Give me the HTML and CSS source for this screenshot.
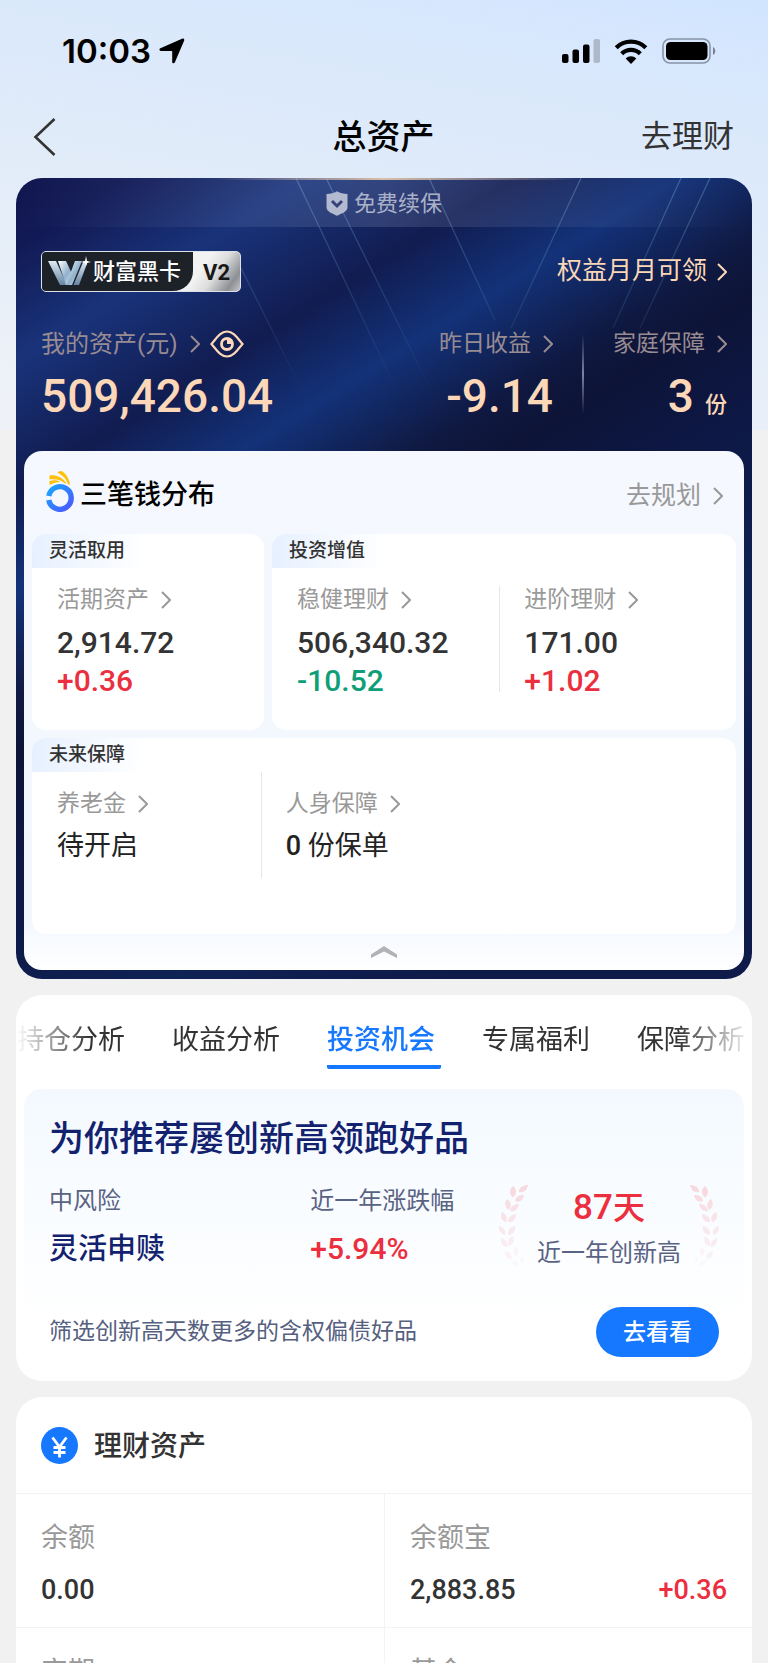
FILE: index.html
```html
<!DOCTYPE html>
<html lang="zh-CN">
<head>
<meta charset="utf-8">
<meta name="viewport" content="width=device-width, initial-scale=1">
<title>总资产</title>
<link rel="stylesheet" href="styles.css">
</head>
<body>
<svg class="defs" width="0" height="0" aria-hidden="true">
  <symbol id="chev" viewBox="0 0 10 18"><path d="M1 1l8 8-8 8" fill="none" stroke="currentColor" stroke-width="2"/></symbol>
  <symbol id="laurel" viewBox="0 0 30 84">
    <g fill="#f6c3ca">
      <path opacity=".6" d="M20 7c0-5 4-7 9-7-1 5-4 8-9 7z"/>
      <path opacity=".6" d="M14 12.500c-4-3-4-8 0-11.500 4 3 4 8 0 11.500z"/>
      <path opacity=".55" d="M16 16c1-5 4-6 9-6-1 5-4 8-9 6z"/>
      <path opacity=".52" d="M10 25c-4-2-5-7-2-11 4 3 5 7 2 11z"/>
      <path opacity=".48" d="M11 26c1-5 4-7 9-7-1 5-4 8-9 7z"/>
      <path opacity=".43" d="M7 37c-5-1-6-6-4-10 4 2 6 6 4 10z"/>
      <path opacity=".4" d="M9 37c0-5 3-7 8-8 0 5-3 9-8 8z"/>
      <path opacity=".35" d="M6 50c-5-1-6-5-6-9 5 1 7 5 6 9z"/>
      <path opacity=".33" d="M9 50c0-5 2-8 7-9 1 5-2 9-7 9z"/>
      <path opacity=".28" d="M8 62c-5-1-7-5-6-9 4 1 7 4 6 9z"/>
      <path opacity=".25" d="M9 61c-1-5 1-8 5-10 2 5 0 9-5 10z"/>
      <path opacity=".18" d="M13 74c-5 0-7-3-7-8 5 1 7 4 7 8z"/>
      <path opacity=".15" d="M16 71c-2-4-1-7 1-9 4 3 3 7-1 9z"/>
      <path opacity=".1" d="M20 81c-4 0-6-2-7-5 4-1 7 1 7 5zM23 78c-2-3-2-5 0-7 2 3 2 5 0 7z"/>
    </g>
  </symbol>
</svg>
<div class="app">
  <div class="status">
    <div class="status-side">
      <span class="clock">10:03</span>
      <svg width="26" height="26" viewBox="0 0 26 26"><path d="M23 .8c1.500-.7 2.700.5 2.100 2L15.900 24.300c-.6 1.400-2.700 1.200-2.700-.4V13.600c0-.5-.2-.7-.7-.7H1.900c-1.700 0-2-2-.5-2.700z"/></svg>
    </div>
    <div class="status-side status-icons">
      <svg width="38" height="24" viewBox="0 0 38 24"><rect x="0" y="15" width="6.500" height="9" rx="2"/><rect x="10.500" y="10.500" width="6.500" height="13.500" rx="2"/><rect x="21" y="5.500" width="6.500" height="18.500" rx="2"/><rect x="31.500" y="0" width="6.500" height="24" rx="2" fill="#adb9ca"/></svg>
      <svg width="34" height="25" viewBox="0 0 34 25"><g fill="none" stroke="#000" stroke-width="4.300"><path d="M2.200 8.800a21 21 0 0 1 29.600 0"/><path d="M7.700 14.700a13 13 0 0 1 18.600 0"/></g><path d="M17 25l-5.300-5.500a7.600 7.600 0 0 1 10.600 0z"/></svg>
      <svg width="54" height="26" viewBox="0 0 54 26"><rect x="1" y="1" width="47" height="24" rx="7" fill="none" stroke="#8794a5" stroke-width="1.600"/><rect x="4" y="4" width="41.500" height="18" rx="4.500"/><path d="M51 9v8c3-1.500 3-6.500 0-8z" fill="#76828f"/></svg>
    </div>
  </div>

  <header class="nav">
    <button class="back" type="button" aria-label="返回"><svg width="24" height="38" viewBox="0 0 24 38"><path d="M21.500 1L2.500 19l19 18" fill="none" stroke="#333" stroke-width="2.600"/></svg></button>
    <h1 class="nav-title">总资产</h1>
    <a class="nav-link" href="#">去理财</a>
  </header>

  <section class="wealth">
    <svg class="rays" viewBox="0 0 736 272" preserveAspectRatio="none" aria-hidden="true">
      <defs><linearGradient id="ray" gradientUnits="userSpaceOnUse" x1="0" y1="0" x2="0" y2="215"><stop offset="0" stop-color="#6fa5cf" stop-opacity=".4"/><stop offset="1" stop-color="#6fa5cf" stop-opacity="0"/></linearGradient></defs>
      <path d="M413 0l66 142M310 0l104 210M280 0l102 215M225 90l70 140M565 0l-70 150M665 0l-68 150M694 0l-70 150" fill="none" stroke="url(#ray)" stroke-width="1.300"/>
    </svg>
    <a class="renew" href="#">
      <svg width="22" height="25" viewBox="0 0 22 25"><path d="M11 .3c3 2 6.500 2.500 10.500 2.700v13c0 5-6 6.500-10.500 8.700C6.500 22.500.5 21 .5 16V3C4.500 2.800 8 2.300 11 .3z" fill="#b3bad0"/><path d="M6 10l5 5 5-5" fill="none" stroke="#33437a" stroke-width="3"/></svg>
      <span>免费续保</span>
    </a>
    <div class="member">
      <a class="badge" href="#">
        <span class="badge-name">
          <svg width="44" height="32" viewBox="0 0 44 32"><defs><linearGradient id="steel" x1="0" y1="0" x2="1" y2="1"><stop offset="0" stop-color="#fff"/><stop offset=".55" stop-color="#8fb0cc"/><stop offset="1" stop-color="#e8f4fc"/></linearGradient><linearGradient id="steel2" x1="0" y1="0" x2="0" y2="1"><stop offset="0" stop-color="#dfeaf4"/><stop offset="1" stop-color="#6685a3"/></linearGradient></defs><path d="M1 5h8l11 24h-7z" fill="url(#steel2)"/><path d="M11 5h8l8 17-4 7h-4z" fill="url(#steel)"/><path d="M28 5h7l-10 24h-6z" fill="url(#steel)"/><path d="M36.500 5H41l-9 24h-5.500z" fill="url(#steel2)"/><path d="M39 0l1 5 4 1-4 1-1 3-1-3-4-1 4-1z" fill="#fff"/></svg>
          <span>财富黑卡</span>
        </span>
        <span class="badge-level">V2</span>
      </a>
      <a class="perks" href="#"><span>权益月月可领</span><svg class="chev"><use href="#chev"/></svg></a>
    </div>
    <div class="totals">
      <div class="total total-main">
        <div class="total-label"><a class="label-link label-main" href="#"><span>我的资产(元)</span><svg class="chev"><use href="#chev"/></svg></a>
          <button class="eye" type="button" aria-label="隐藏金额"><svg width="34" height="28" viewBox="0 0 34 28"><g fill="none" stroke="#fcd7b8"><path d="M1.500 14C6 9 10 1.500 17 1.500S28 9 32.500 14C28 19 24 26.500 17 26.500S6 19 1.500 14z" stroke-width="2.200"/><circle cx="17" cy="14" r="5.500" stroke-width="2.800"/></g><path d="M17 9v5h5A5 5 0 0 0 17 9z" fill="#fcd7b8"/></svg></button></div>
        <div class="total-value">509,426.04</div>
      </div>
      <div class="total total-right">
        <a class="label-link" href="#"><span>昨日收益</span><svg class="chev"><use href="#chev"/></svg></a>
        <div class="total-value">-9.14</div>
      </div>
      <div class="total-rule"></div>
      <div class="total total-right">
        <a class="label-link" href="#"><span>家庭保障</span><svg class="chev"><use href="#chev"/></svg></a>
        <div class="total-value">3<span class="unit">份</span></div>
      </div>
    </div>

    <div class="plan">
      <div class="plan-head">
        <svg class="plan-logo" width="30" height="42" viewBox="0 0 30 42"><defs><linearGradient id="ring" x1="0" y1="0" x2="1" y2="1"><stop offset="0" stop-color="#18a6ff"/><stop offset="1" stop-color="#4d57ff"/></linearGradient></defs><path d="M3.800 26a11.300 11.300 0 1 1 0 4" fill="none" stroke="url(#ring)" stroke-width="5.400"/><g fill="#ffc107"><path d="M12.500 2.500C14 1 16 .5 17.500 1.500c4 3 7 7.500 7.500 13.500l-2-.8c-1.500-5-5-8.700-10.500-11.700z"/><path d="M4.500 5.500c6-.8 13 1.500 17 8l-2-.3C15.500 9.500 10 9 4.500 9.500z"/><path d="M4.500 11c4-1 8-1 11 1-4 0-7 1-11 3z"/></g></svg>
        <h2 class="plan-title">三笔钱分布</h2>
        <a class="plan-link" href="#"><span>去规划</span><svg class="chev"><use href="#chev"/></svg></a>
      </div>
      <div class="buckets">
        <section class="bucket">
          <h3 class="tag">灵活取用</h3>
          <div class="cells"><div class="cell">
            <a class="cell-label" href="#"><span>活期资产</span><svg class="chev"><use href="#chev"/></svg></a>
            <div class="amount">2,914.72</div><div class="amount up">+0.36</div>
          </div></div>
        </section>
        <section class="bucket">
          <h3 class="tag">投资增值</h3>
          <div class="cells two">
            <div class="cell">
              <a class="cell-label" href="#"><span>稳健理财</span><svg class="chev"><use href="#chev"/></svg></a>
              <div class="amount">506,340.32</div><div class="amount down">-10.52</div>
            </div>
            <div class="cell">
              <a class="cell-label" href="#"><span>进阶理财</span><svg class="chev"><use href="#chev"/></svg></a>
              <div class="amount">171.00</div><div class="amount up">+1.02</div>
            </div>
          </div>
        </section>
        <section class="bucket wide">
          <h3 class="tag">未来保障</h3>
          <div class="cells thirds">
            <div class="cell">
              <a class="cell-label" href="#"><span>养老金</span><svg class="chev"><use href="#chev"/></svg></a>
              <div class="cover">待开启</div>
            </div>
            <div class="cell">
              <a class="cell-label" href="#"><span>人身保障</span><svg class="chev"><use href="#chev"/></svg></a>
              <div class="cover"><b>0</b> 份保单</div>
            </div>
          </div>
        </section>
      </div>
      <button class="fold" type="button" aria-label="收起"><svg width="26" height="12" viewBox="0 0 26 12"><path d="M0 8.500L13 0l13 8.500V12L13 5.500 0 12z" fill="#b0b2b6"/></svg></button>
    </div>
  </section>

  <section class="card">
    <nav class="tabs">
      <a class="tab" href="#">持仓分析</a>
      <a class="tab" href="#">收益分析</a>
      <a class="tab active" href="#">投资机会</a>
      <a class="tab" href="#">专属福利</a>
      <a class="tab" href="#">保障分析</a>
    </nav>
    <div class="offer">
      <h2 class="offer-title">为你推荐屡创新高领跑好品</h2>
      <div class="facts">
        <div class="fact"><div class="fact-label">中风险</div><div class="fact-value">灵活申赎</div></div>
        <div class="fact"><div class="fact-label">近一年涨跌幅</div><div class="fact-value rate">+5.94%</div></div>
        <div class="award">
          <svg class="laurel" viewBox="0 0 30 84"><use href="#laurel"/></svg>
          <div class="award-text"><div class="award-days">87<span>天</span></div><div class="fact-label">近一年创新高</div></div>
          <svg class="laurel flip" viewBox="0 0 30 84"><use href="#laurel"/></svg>
        </div>
      </div>
      <div class="offer-foot"><p class="note">筛选创新高天数更多的含权偏债好品</p><button class="go" type="button">去看看</button></div>
    </div>
  </section>

  <section class="card holdings">
    <div class="holdings-head">
      <svg width="37" height="37" viewBox="0 0 37 37"><circle cx="18.500" cy="18.500" r="18.500" fill="#1677ff"/><path d="M11.500 10.500l7 9.500 7-9.500M18.500 19v11.500M12.500 20.500h12M12.500 25.500h12" fill="none" stroke="#fff" stroke-width="2.800"/></svg>
      <h2 class="holdings-title">理财资产</h2>
    </div>
    <div class="grid">
      <a class="item" href="#"><span class="item-name">余额</span><span class="item-row"><span>0.00</span></span></a>
      <a class="item" href="#"><span class="item-name">余额宝</span><span class="item-row"><span>2,883.85</span><span class="up">+0.36</span></span></a>
      <a class="item" href="#"><span class="item-name">定期</span></a>
      <a class="item" href="#"><span class="item-name">基金</span></a>
    </div>
  </section>
</div>
</body>
</html>
```
FILE: styles.css
```css
* { box-sizing: border-box; }
body, h1, h2, h3, p { margin: 0; }
body {
  font-family: Roboto, "Noto Sans CJK SC", sans-serif;
  color: #333;
  background: #f1f1f1;
}
h1, h2, h3 { font-weight: 500; }
a { color: inherit; text-decoration: none; }
button { border: 0; padding: 0; background: none; font: inherit; color: inherit; }
svg { display: block; flex: none; }
.defs { position: absolute; }
.chev { width: 10px; height: 18px; }

.app {
  height: 100vh;
  overflow-y: auto;
  scrollbar-width: none;
  padding: 0 16px;
  background: linear-gradient(190deg, #d1e5ff 0, #d9e8fc 100px, #e0ebf9 250px, #eef2f8 520px) 0 0 / 100% 430px no-repeat #f1f1f1;
}

.status {
  height: 102px;
  padding: 0 36px 0 46px;
  display: flex;
  align-items: center;
  justify-content: space-between;
}
.status-side { display: flex; align-items: center; gap: 8px; }
.status-icons { gap: 14px; }
.clock { font: 600 33px/40px Inter, sans-serif; color: #000; }

.nav {
  height: 76px;
  padding: 0 18px 6px 17px;
  display: grid;
  grid-template-columns: 1fr auto 1fr;
  align-items: center;
}
.nav-title { font-size: 34px; line-height: 44px; color: #000; }
.nav-link { justify-self: end; font-size: 31px; line-height: 44px; }

.wealth {
  position: relative;
  padding: 0 8px 9px;
  border-radius: 26px;
  overflow: hidden;
  background: linear-gradient(148deg, #10154e 0, #121a55 60px, #19337a 155px, #111c50 265px, #133279 350px, #0f1840 445px, #0d1438 490px, #0d1846 600px, #0f2254 760px, #0e1a4a 900px);
}
.rays { position: absolute; top: 0; left: 0; width: 100%; height: 272px; }
.renew {
  position: relative;
  height: 49px;
  margin: 0 -8px;
  padding-top: 2px;
  display: flex;
  align-items: center;
  justify-content: center;
  gap: 6px;
  font-size: 22px;
  line-height: 32px;
  color: #aab1ca;
  background:
    linear-gradient(90deg, transparent 27%, #d9bfa8 50%, transparent 77%) 0 0 / 100% 2px no-repeat,
    linear-gradient(90deg, transparent, rgba(190, 200, 230, .17) 50%, transparent);
}
.member {
  position: relative;
  margin: 24px 17px 0;
  display: flex;
  align-items: center;
  justify-content: space-between;
}
.badge {
  height: 41px;
  display: flex;
  border: 1px solid #dde1e8;
  border-radius: 5px;
  overflow: hidden;
  background: linear-gradient(125deg, #f2f2f2 76%, #ddd 84%, #8d8f93 94%, #c4c5c8);
}
.badge-name {
  display: flex;
  align-items: center;
  gap: 2px;
  padding: 0 12px 0 5px;
  font-size: 22px;
  font-weight: 500;
  line-height: 36px;
  color: #fff;
  background: #1d2229;
  border-bottom-right-radius: 20px;
}
.badge-level { padding: 0 10px; font-size: 22px; font-weight: 700; line-height: 42px; color: #171717; }
.perks { display: flex; align-items: center; gap: 10px; font-size: 25px; line-height: 36px; color: #fcd7b8; }
.perks span { padding-bottom: 2px; }

.totals { position: relative; margin: 31px 17px 16px; display: flex; }
.total-main { flex: 1; }
.total-right { display: flex; flex-direction: column; align-items: flex-end; }
.total-label { display: flex; align-items: center; gap: 10px; }
.label-link { display: flex; align-items: center; gap: 12px; font-size: 23px; line-height: 42px; color: #998b92; }
.label-main { font-size: 24px; }
.total-value { margin-top: 1px; font-size: 46px; font-weight: 500; line-height: 60px; color: #fcd7b8; }
.unit { margin-left: 11px; font-size: 22px; }
.total-rule { width: 2px; height: 80px; margin: 11px 29px 0; background: linear-gradient(transparent, #7d84a2 50%, transparent); }

.plan {
  position: relative;
  padding: 0 8px;
  border-radius: 18px;
  background: linear-gradient(#f5f8fe, #f2f7fe 90%, #fff);
}
.plan-head { height: 83px; padding: 0 13px; display: flex; align-items: center; }
.plan-logo { margin: 0 5px 4px 0; }
.plan-title { flex: 1; margin-top: 4px; font-size: 27px; line-height: 40px; color: #000; }
.plan-link { margin-top: 6px; display: flex; align-items: center; gap: 12px; font-size: 25px; line-height: 40px; color: #999; }
.buckets { display: grid; grid-template-columns: 1fr 2fr; gap: 8px; }
.bucket { min-height: 196px; border-radius: 14px; background: #fff; overflow: hidden; }
.wide { grid-column: 1 / -1; }
.tag { width: 112px; padding-left: 17px; font-size: 19px; line-height: 34px; white-space: nowrap; background: linear-gradient(90deg, #e6f0ff, #fff); }
.cells { display: grid; }
.two { grid-template-columns: 49% 51%; }
.thirds { grid-template-columns: 65fr 135fr; }
.cell { padding: 14px 0 0 25px; }
.cell + .cell { background: linear-gradient(#e6e6e6, #e6e6e6) 0 18px / 1px 106px no-repeat; }
.wide .cell + .cell { min-height: 106px; background-position: 0 0; }
.cell-label { display: flex; align-items: center; gap: 12px; font-size: 23px; line-height: 36px; color: #999; }
.amount { font-size: 30px; font-weight: 500; line-height: 38px; }
.cell-label + .amount { margin-top: 6px; }
.up { color: #eb2f3f; }
.down { color: #0f9f78; }
.cover { margin-top: 3px; font-size: 27px; line-height: 42px; color: #222; }
.cover b { font-weight: 500; }
.fold { display: flex; width: 100%; height: 36px; align-items: center; justify-content: center; }

.card { margin-top: 16px; border-radius: 26px; background: #fff; overflow: hidden; }
.tabs {
  display: flex;
  gap: 41px;
  height: 94px;
  overflow: hidden;
  padding: 22px 0 0 1px;
  -webkit-mask-image: linear-gradient(90deg, transparent, #000 10%, #000 90%, transparent 100%);
}
.tab { flex: none; width: 114px; height: 52px; font-size: 27px; line-height: 46px; }
.active { color: #1677ff; font-weight: 500; border-bottom: 4px solid #1677ff; border-radius: 2px; }
.offer { margin: 0 8px; padding: 28px 25px 24px; border-radius: 18px; background: linear-gradient(#f3f9ff, #fff 80%); }
.offer-title { font-size: 35px; line-height: 46px; color: #13226f; }
.facts { display: flex; margin-top: 20px; }
.fact { width: 39%; }
.fact + .fact { flex: 1; }
.fact-label { font-size: 24px; line-height: 36px; color: #5a6384; }
.fact-value { margin-top: 8px; font-size: 29px; font-weight: 500; line-height: 44px; color: #13226f; }
.fact-value.rate { color: #eb2f3f; font-size: 30px; }
.award { display: flex; gap: 8px; text-align: center; }
.laurel { width: 30px; height: 84px; margin-top: 2px; }
.flip { transform: scaleX(-1); }
.award-text { padding-top: 3px; }
.award-text .fact-label { margin-top: 5px; }
.award-days { font-size: 35px; font-weight: 500; line-height: 44px; color: #eb2f3f; }
.award-days span { font-size: 32px; }
.offer-foot { display: flex; align-items: center; justify-content: space-between; margin-top: 36px; }
.note { font-size: 23px; line-height: 36px; color: #56607f; }
.go { width: 123px; height: 50px; padding-bottom: 4px; border-radius: 25px; background: #1677ff; color: #fff; font-size: 23px; font-weight: 500; }

.holdings { border-radius: 26px 26px 0 0; }
.holdings-head { height: 96px; padding: 0 25px; display: flex; align-items: center; gap: 16px; }
.holdings-title { padding-top: 3px; font-size: 28px; line-height: 40px; }
.grid { display: grid; grid-template-columns: 1fr 1fr; }
.item { min-height: 134px; padding: 24px 25px 0; border-top: 1px solid #f3f3f3; }
.item:nth-child(even) { border-left: 1px solid #f3f3f3; }
.item-name { display: block; font-size: 27px; line-height: 40px; color: #999; }
.item-row { display: flex; justify-content: space-between; margin-top: 12px; font-size: 27px; font-weight: 500; line-height: 40px; }
```
